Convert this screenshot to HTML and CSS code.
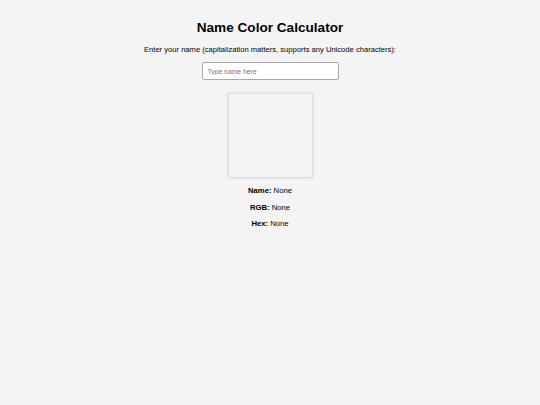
FILE: index.html
```html
<!DOCTYPE html>
<html>
<head>
<meta charset="utf-8">
<link rel="stylesheet" href="styles.css">
</head>
<body>
<div class="page">
  <h1 class="title">Name Color Calculator</h1>
  <p class="prompt">Enter your name (capitalization matters, supports any Unicode characters):</p>
  <input class="name-input" type="text" placeholder="Type name here">
  <div class="swatch"></div>
  <div class="details">
    <p class="info"><b>Name:</b> None</p>
    <p class="info"><b>RGB:</b> None</p>
    <p class="info"><b>Hex:</b> None</p>
  </div>
</div>
</body>
</html>
```
FILE: styles.css
```css
html, body {
  margin: 0;
  padding: 0;
  background: #f4f4f4;
  height: 100%;
}
body {
  font-family: "Liberation Sans", Arial, sans-serif;
  color: #000;
}
.page {
  display: flex;
  flex-direction: column;
  align-items: center;
  padding-top: 18px;
}
.title {
  margin: 0;
  font-size: 13.6px;
  font-weight: bold;
  line-height: 20px;
}
.prompt {
  margin: 7px 0 0;
  font-size: 7.6px;
  line-height: 10px;
}
.name-input {
  margin-top: 7px;
  box-sizing: border-box;
  width: 137px;
  height: 18px;
  border: 1px solid #a8a8a8;
  border-radius: 2px;
  background: #fff;
  padding: 0 5px;
  font-family: "Liberation Sans", Arial, sans-serif;
  font-size: 6.8px;
  outline: none;
}
.name-input::placeholder {
  color: #777;
}
.swatch {
  margin-top: 13px;
  box-sizing: border-box;
  width: 85px;
  height: 85px;
  background: #f4f4f4;
  border: 1px solid #dedede;
  box-shadow: 0 0 3px rgba(0,0,0,0.12);
}
.details {
  display: flex;
  flex-direction: column;
  align-items: center;
  gap: 6.5px;
  margin-top: 8px;
}
.info {
  margin: 0;
  font-size: 7.7px;
  line-height: 10px;
}
```
